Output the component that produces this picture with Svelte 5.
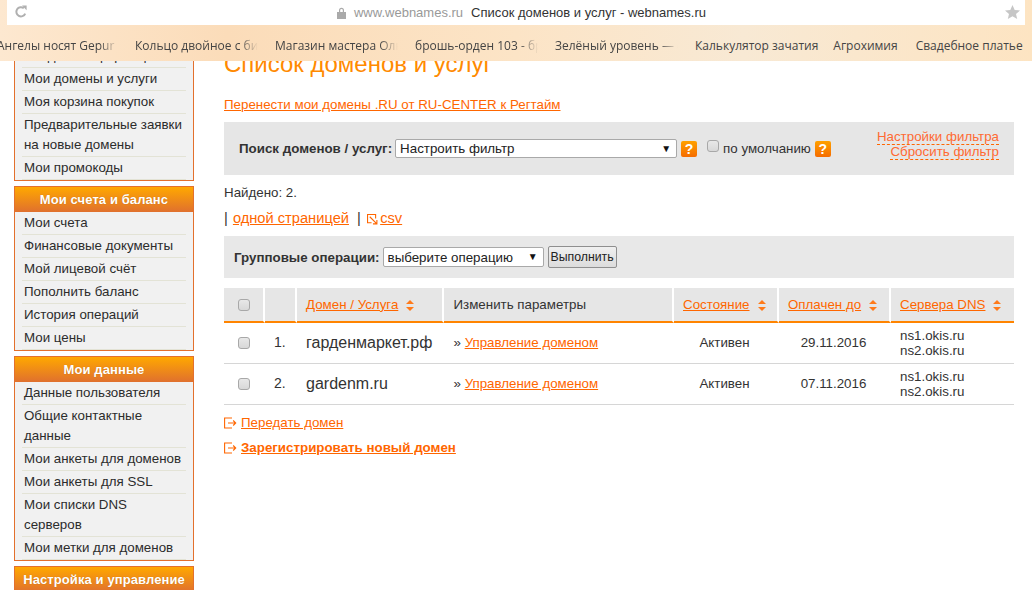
<script>
  const bookmarks = [
    { name: "Ангелы носят Gepur | Одежда", cut: true },
    { name: "Кольцо двойное с бижутерией", cut: true },
    { name: "Магазин мастера Ольга Ивановна", cut: true },
    { name: "брошь-орден 103 - брошь", cut: true },
    { name: "Зелёный уровень — сайт", cut: true },
    { name: "Калькулятор зачатия" },
    { name: "Агрохимия" },
    { name: "Свадебное платье" }
  ];

  const menus = [
    {
      items: ["Сводная информация", "Мои домены и услуги", "Моя корзина покупок", "Предварительные заявки на новые домены", "Мои промокоды"]
    },
    {
      title: "Мои счета и баланс",
      items: ["Мои счета", "Финансовые документы", "Мой лицевой счёт", "Пополнить баланс", "История операций", "Мои цены"]
    },
    {
      title: "Мои данные",
      items: ["Данные пользователя", "Общие контактные данные", "Мои анкеты для доменов", "Мои анкеты для SSL", "Мои списки DNS серверов", "Мои метки для доменов"]
    },
    { title: "Настройка и управление", items: [] }
  ];

  const domains = [
    { num: "1.", name: "гарденмаркет.рф", status: "Активен", paid: "29.11.2016" },
    { num: "2.", name: "gardenm.ru", status: "Активен", paid: "07.11.2016" }
  ];
</script>

{#snippet sortArrows()}
  <svg class="sort" width="8" height="11" viewBox="0 0 8 11"><path d="M4 0L8 4H0zM0 7H8L4 11z" fill="#ff7a1a" /></svg>
{/snippet}

{#snippet arrowIcon()}
  <svg class="go" width="13" height="12" viewBox="0 0 13 12" fill="none" stroke="#ff6600" stroke-width="1.1">
    <path d="M8 1H.6v10H8M4 6h7.500M9.200 3.500L11.700 6 9.200 8.500" />
  </svg>
{/snippet}

<div class="page">
  <aside class="sidebar">
    {#each menus as menu}
      <section class="box">
        {#if menu.title}<h3>{menu.title}</h3>{/if}
        {#if menu.items.length}
          <ul>
            {#each menu.items as item}
              <li>{item}</li>
            {/each}
          </ul>
        {/if}
      </section>
    {/each}
  </aside>

  <main>
    <h1>Список доменов и услуг</h1>
    <p class="transfer"><a href="#top">Перенести мои домены .RU от RU-CENTER к Регтайм</a></p>

    <div class="filter">
      <b>Поиск доменов / услуг:</b>
      <span class="select wide"><select><option>Настроить фильтр</option></select></span>
      <span class="help">?</span>
      <label class="default"><input type="checkbox" />по умолчанию</label>
      <span class="help">?</span>
      <div class="filter-links">
        <a href="#top">Настройки фильтра</a>
        <a href="#top">Сбросить фильтр</a>
      </div>
    </div>

    <p class="found">Найдено: 2.</p>
    <p class="pages">
      | <a class="single" href="#top">одной страницей</a> &nbsp;|&nbsp;
      <svg width="11" height="11" viewBox="0 0 12 12" fill="none" stroke="#ff6600" stroke-width="1.200">
        <path d="M5 9.500H.6V.6h8.800V5M3 3l7.500 7.500M10.800 6.500v4.300H6.500" />
      </svg>
      <a class="csv" href="#top">csv</a>
    </p>

    <div class="group">
      <b>Групповые операции:</b>
      <span class="select narrow"><select><option>выберите операцию</option></select></span>
      <button type="button">Выполнить</button>
    </div>

    <table>
      <colgroup>
        <col style="width: 41px" /><col style="width: 32px" /><col style="width: 147px" /><col style="width: 230px" />
        <col style="width: 105px" /><col style="width: 112px" /><col style="width: 123px" />
      </colgroup>
      <thead>
        <tr>
          <th class="check"><input type="checkbox" /></th>
          <th></th>
          <th><a href="#top">Домен / Услуга</a>{@render sortArrows()}</th>
          <th class="params">Изменить параметры</th>
          <th><a href="#top">Состояние</a>{@render sortArrows()}</th>
          <th><a href="#top">Оплачен до</a>{@render sortArrows()}</th>
          <th><a href="#top">Сервера DNS</a>{@render sortArrows()}</th>
        </tr>
      </thead>
      <tbody>
        {#each domains as d}
          <tr>
            <td class="check"><input type="checkbox" /></td>
            <td class="num">{d.num}</td>
            <td class="name">{d.name}</td>
            <td class="params">» <a href="#top">Управление доменом</a></td>
            <td class="center status">{d.status}</td>
            <td class="center paid">{d.paid}</td>
            <td class="dns">ns1.okis.ru<br />ns2.okis.ru</td>
          </tr>
        {/each}
      </tbody>
    </table>

    <p class="action">{@render arrowIcon()}<a href="#top">Передать домен</a></p>
    <p class="action strong">{@render arrowIcon()}<a href="#top">Зарегистрировать новый домен</a></p>
  </main>

  <!-- browser chrome lying over the scrolled page -->
  <div class="chrome">
    <div class="urlbar">
      <svg class="reload" width="14" height="14" viewBox="0 0 14 14" fill="none">
        <path d="M11.200 8.600A4.600 4.600 0 1 1 9.800 3.200" stroke="#b0b0b0" stroke-width="2" />
        <path d="M8 .6h4.600v4.600z" fill="#b0b0b0" />
      </svg>
      <div class="address">
        <svg width="9" height="12" viewBox="0 0 9 12"><path d="M0 5h9v7H0zM2 5V3.200a2.500 2.500 0 0 1 5 0V5H5.800V3.200a1.300 1.300 0 0 0-2.600 0V5z" fill="#aaa" /></svg>
        <span class="host">www.webnames.ru</span>
        <span class="title">Список доменов и услуг - webnames.ru</span>
      </div>
      <svg class="star" width="15" height="14" viewBox="0 0 15 14"><path d="M7.500 0l2.200 4.900 5.300.5-4 3.500 1.200 5.100-4.700-2.700L2.800 14 4 8.900 0 5.400l5.300-.5z" fill="#c6c6c6" /></svg>
    </div>
    <div class="bookmarks">
      {#each bookmarks as b}
        <span class="bookmark" class:cut={b.cut}>{b.name}</span>
      {/each}
    </div>
  </div>
</div>

<style>
  :global(body) {
    overflow: hidden;
    background: #fff;
  }

  .page {
    position: relative;
    display: flex;
    gap: 30px;
    height: 590px;
    padding-left: 14px;
    overflow: hidden;
    font: 13.33px/15px "Liberation Sans", Arial, sans-serif;
    color: #333;
  }

  a {
    color: #ff6600;
    text-decoration: underline;
  }

  p {
    margin: 0;
  }

  /* sidebar */
  .sidebar {
    flex: none;
    width: 180px;
    padding-top: 44px;
  }

  .box {
    margin-bottom: 5px;
    border: 1px solid #e3702d;
    background: #f1f1f1;
  }

  .box h3 {
    margin: 0;
    height: 25px;
    font-size: 13px;
    line-height: 25px;
    font-weight: bold;
    text-align: center;
    color: #fff;
    background: linear-gradient(#ffa800, #e0702e);
    text-shadow: 0 0 1px rgba(120, 60, 0, 0.4);
    letter-spacing: 0.1px;
  }

  .box ul {
    margin: 0;
    padding: 0 7px;
    list-style: none;
  }

  .box li {
    padding: 1px 0 1px 2px;
    line-height: 20px;
    border-bottom: 1px solid #e3e3d6;
    color: #2c2c2c;
  }

  /* main column */
  main {
    flex: none;
    width: 790px;
    padding-top: 50px;
  }

  h1 {
    margin: 0 0 19px;
    font-size: 24px;
    line-height: 28px;
    font-weight: normal;
    color: #ff8a00;
  }

  .transfer {
    margin-bottom: 10px;
  }

  .filter {
    display: flex;
    align-items: center;
    height: 53px;
    padding-left: 15px;
    background: #e6e6e6;
  }

  .filter b {
    margin-right: 3px;
  }

  .select {
    position: relative;
    display: block;
    flex: none;
  }

  .select::after {
    content: "▼";
    position: absolute;
    top: 50%;
    right: 6px;
    transform: translateY(-50%);
    font-size: 10px;
    line-height: 10px;
    color: #111;
    pointer-events: none;
  }

  select {
    display: block;
    width: 100%;
    height: 100%;
    padding: 0 0 0 4px;
    appearance: none;
    border: 1px solid #a9a9a9;
    border-radius: 2px;
    background: #fff;
    font: 13.33px "Liberation Sans", Arial, sans-serif;
    color: #222;
  }

  .wide {
    width: 282px;
    height: 19px;
  }

  .narrow {
    width: 161px;
    height: 20px;
    margin: 0 4px 0 3px;
  }

  .help {
    flex: none;
    width: 16px;
    height: 16px;
    margin-left: 4px;
    border-radius: 2px;
    background: linear-gradient(#ffa100, #f56c00);
    color: #fff;
    font-size: 14px;
    line-height: 16px;
    font-weight: bold;
    text-align: center;
  }

  .default {
    display: flex;
    align-items: center;
    gap: 4px;
    margin-left: 10px;
    color: #333;
  }

  input[type="checkbox"] {
    display: block;
    flex: none;
    width: 12px;
    height: 12px;
    margin: 0;
    appearance: none;
    border: 1px solid #a8a8a8;
    border-radius: 3px;
    background: linear-gradient(#e8e8e8, #d8d8d8);
  }

  .default input {
    position: relative;
    top: -3px;
  }

  .filter-links {
    display: flex;
    flex-direction: column;
    align-items: flex-end;
    margin-left: auto;
    margin-right: 15px;
    margin-top: -9px;
    line-height: 15px;
  }

  .filter-links a {
    color: #ff6a33;
    text-decoration: none;
    border-bottom: 1px dashed #ff6600;
    margin-bottom: -1px;
  }

  .found {
    margin-top: 10px;
  }

  .pages {
    margin-top: 10px;
    font-size: 14.67px;
    line-height: 16px;
    white-space: nowrap;
  }

  .pages svg {
    margin-left: -2px;
    vertical-align: -2px;
  }

  .single {
    margin-left: 1px;
  }

  .csv {
    margin-left: -2px;
  }

  .group {
    display: flex;
    align-items: center;
    height: 42px;
    margin-top: 10px;
    padding-left: 10px;
    background: #e8e8e8;
  }

  button {
    height: 22px;
    width: 69px;
    padding: 0;
    border: 1px solid #8f8f8f;
    border-radius: 2px;
    background: linear-gradient(#f0f0f0, #dcdcdc);
    font: 12.3px "Liberation Sans", Arial, sans-serif;
    color: #222;
  }

  table {
    width: 790px;
    margin-top: 10px;
    table-layout: fixed;
    border-collapse: separate;
    border-spacing: 0;
  }

  th {
    height: 35px;
    padding: 0 0 1px 9px;
    box-sizing: border-box;
    background: #e6e6e6;
    border-right: 2px solid #fff;
    border-bottom: 2px solid #ff8400;
    font-weight: normal;
    text-align: left;
    white-space: nowrap;
  }

  th:last-child {
    border-right: 0;
  }

  th.check,
  td.check {
    padding: 0 0 0 14px;
  }

  th.params,
  td.params {
    padding-left: 9.5px;
  }

  .sort {
    margin-left: 8px;
    vertical-align: -2px;
  }

  td {
    height: 41px;
    box-sizing: border-box;
    padding: 0 0 2px;
    border-bottom: 1px solid #d6d6d6;
  }

  .num {
    padding-left: 9px;
    font-size: 14px;
  }

  .name {
    padding-left: 9px;
    font-size: 16px;
    white-space: nowrap;
  }

  .center {
    text-align: center;
  }

  .status {
    padding-right: 4px;
  }

  .paid {
    padding-right: 3px;
  }

  td.dns {
    padding: 0 0 0 9px;
    line-height: 15px;
  }

  .action {
    display: flex;
    align-items: center;
    gap: 4px;
    margin-top: 10px;
  }

  .action.strong {
    font-weight: bold;
  }

  .go {
    flex: none;
  }

  /* browser chrome */
  .chrome {
    position: absolute;
    top: 0;
    left: 0;
    width: 1032px;
    height: 61px;
    background: linear-gradient(90deg, #fde8d0 0, #fbdcb9 22%, #fce4c6 50%, #f8e9d4 72%, #fde4c2 100%);
  }

  .urlbar {
    position: relative;
    display: flex;
    align-items: center;
    justify-content: center;
    height: 25px;
    margin: 0 7px;
    background: #fff;
  }

  .reload {
    position: absolute;
    left: 7px;
    top: 5px;
  }

  .star {
    position: absolute;
    right: 5px;
    top: 5px;
  }

  .address {
    display: flex;
    align-items: center;
    gap: 8px;
    margin-left: 11px;
    font-size: 13px;
  }

  .host {
    color: #999;
  }

  .title {
    color: #333;
  }

  .bookmarks {
    display: flex;
    gap: 17px;
    height: 36px;
    padding-top: 4px;
    box-sizing: border-box;
    margin-left: -5px;
    align-items: center;
    font: 12px "Open Sans", sans-serif;
    color: #444;
    white-space: nowrap;
  }

  .bookmark {
    flex: none;
  }

  .bookmark:first-child {
    padding-left: 2px;
    box-sizing: border-box;
  }

  .bookmark:nth-child(7) {
    margin-left: -2px;
  }

  .bookmark:nth-child(8) {
    margin-left: 1px;
  }

  .bookmark.cut {
    width: 123px;
    overflow: hidden;
    mask-image: linear-gradient(90deg, #000 85%, transparent);
  }
</style>
